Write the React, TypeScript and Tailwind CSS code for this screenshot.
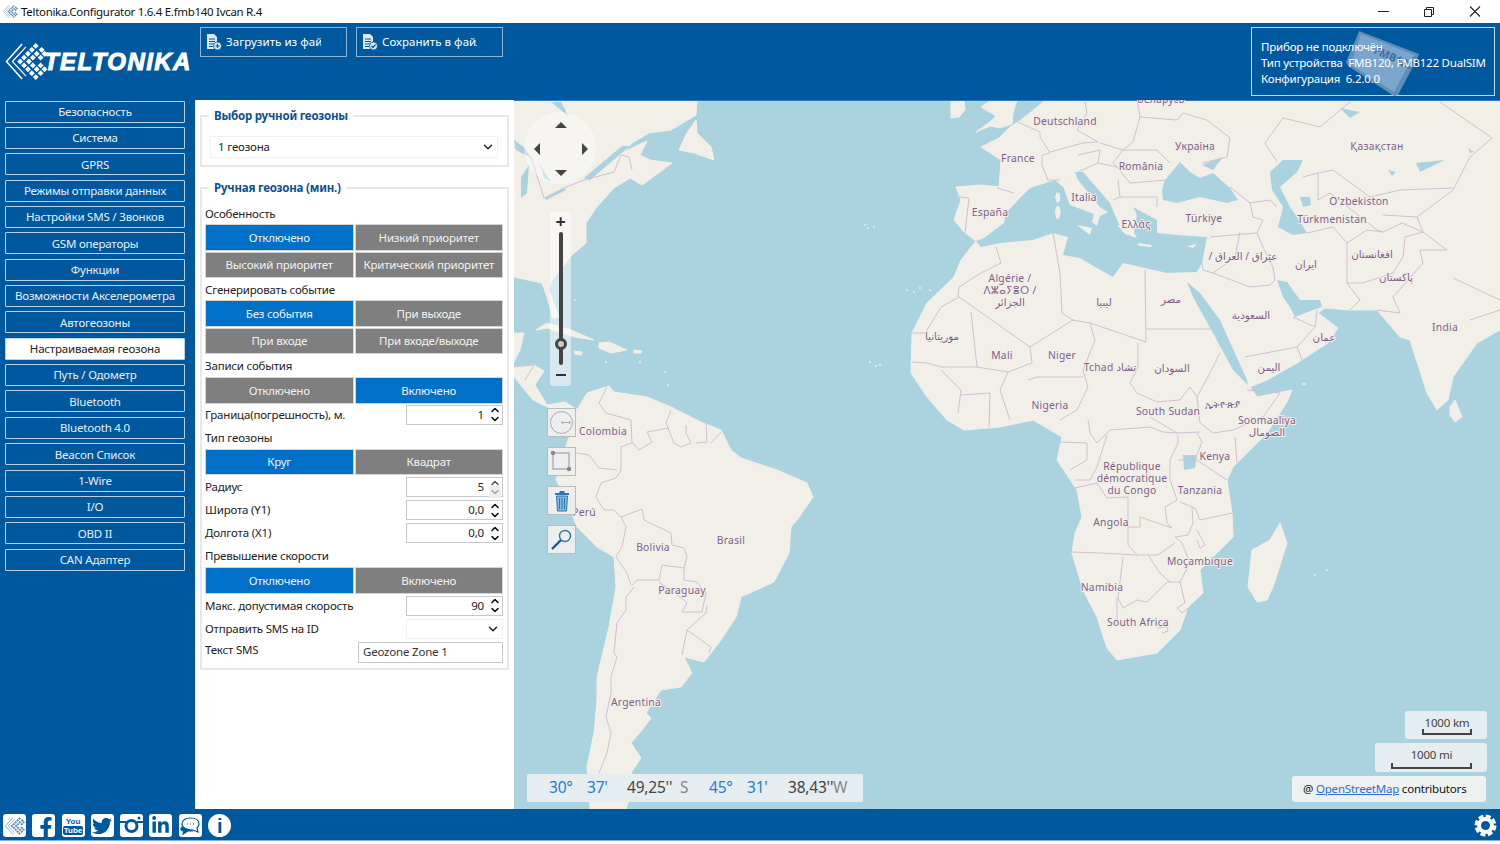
import { ChevronDown, ChevronUp } from "lucide-react";
import { FaFacebookF, FaLinkedinIn, FaTwitter } from "react-icons/fa";

const menu = [
  "Безопасность", "Система", "GPRS", "Режимы отправки данных", "Настройки SMS / Звонков",
  "GSM операторы", "Функции", "Возможности Акселерометра", "Автогеозоны", "Настраиваемая геозона",
  "Путь / Одометр", "Bluetooth", "Bluetooth 4.0", "Beacon Список", "1-Wire", "I/O", "OBD II", "CAN Адаптер",
];

const land = [
  // North America
  "514,100 697,100 696,115 671,130 649,133 632,143 624,152 636,146 647,141 640,155 650,160 672,163 660,172 642,185 630,178 614,188 596,208 586,223 586,243 572,255 551,282 549,290 559,317 553,318 547,297 542,283 514,277",
  // Newfoundland
  "696,120 687,133 679,150 694,153 714,160 711,147 697,133",
  // Mexico tail + Central America
  "514,333 524,333 520,350 514,362",
  "514,367 534,365 544,371 535,385 547,405 565,402 578,410 570,415 554,410 533,400 514,377",
  // Caribbean
  "536,330 547,323 571,330 594,340 574,337 547,328",
  "599,343 609,342 627,350 611,353 599,348",
  "574,351 582,352 581,355 575,354",
  "634,350 642,351 641,353 634,353",
  // South America
  "577,410 587,393 609,386 614,392 647,397 671,407 701,422 721,430 731,450 741,458 777,470 807,483 813,497 797,520 791,527 789,553 774,582 741,597 736,617 721,640 711,653 704,662 684,657 692,673 681,687 661,690 646,713 651,718 642,730 631,743 641,758 631,773 632,790 626,809 590,809 587,767 594,733 597,700 597,677 609,627 616,587 614,557 597,547 577,527 567,500 556,480 567,443 576,420",
  // Afro-Eurasia
  "1045,100 1500,100 1500,330 1477,343 1453,377 1448,400 1437,410 1427,393 1410,340 1400,337 1377,310 1350,310 1325,308 1318,313 1338,328 1328,343 1297,363 1267,380 1250,387 1257,397 1292,390 1287,402 1267,433 1233,467 1227,480 1232,513 1233,537 1217,553 1200,570 1203,593 1188,607 1180,630 1157,653 1117,660 1107,648 1097,617 1083,590 1072,553 1075,533 1082,517 1077,490 1057,460 1062,437 1033,420 1000,427 964,430 947,420 927,397 911,373 912,333 927,303 954,277 961,260 976,241 964,232 954,220 961,200 956,187 981,185 999,187 1001,160 981,147 999,138 1010,127 1018,122 1030,113 1043,102",
  // British Isles
  "991,100 1017,100 1013,113 1012,124 1000,128 990,126 976,132 990,122 996,116 981,107",
  "951,100 964,100 965,110 959,117 951,118",
  // Islands
  "1280,523 1287,543 1273,587 1267,600 1257,602 1248,587 1252,550 1270,540",
  "1450,407 1455,400 1462,417 1455,422 1450,415",
];

const water = [
  // Mediterranean
  "976,241 984,238 1004,223 1006,213 1020,198 1030,188 1055,180 1063,187 1075,172 1083,172 1110,203 1118,222 1122,228 1133,237 1137,215 1133,207 1157,220 1157,233 1177,235 1207,237 1202,263 1197,272 1167,273 1145,268 1123,263 1113,277 1097,268 1080,258 1063,255 1068,237 1053,233 1033,240 1000,243 981,247",
  // Black Sea + Azov
  "1162,190 1165,180 1180,162 1190,172 1200,178 1213,173 1230,188 1238,200 1227,203 1200,197 1177,203 1163,200",
  "1202,165 1223,157 1213,170",
  // Caspian
  "1270,172 1283,160 1303,160 1297,172 1280,187 1290,207 1297,217 1307,233 1293,235 1278,227 1283,207 1272,190",
  "1300,197 1310,197 1311,205 1303,207",
  // Red Sea
  "1187,282 1200,293 1220,320 1247,380 1248,385 1233,370 1213,333 1193,297",
  // Persian Gulf
  "1277,280 1287,282 1300,300 1320,300 1322,307 1313,310 1295,317 1290,307 1283,297",
  // Great lakes, Hudson
  "514,140 525,148 531,158 516,150",
  "521,177 529,165 527,193 521,198",
  "539,163 551,182 544,178 542,170",
  "545,198 564,188 566,190 546,200",
  "551,102 569,117 561,102",
  // St Lawrence
  "584,178 622,146 630,146 590,180",
  // Lakes
  "1183,455 1197,455 1195,468 1184,470",
  "1416,163 1445,160 1420,172",
  "1340,108 1360,112 1350,118",
  "1468,148 1474,152 1470,153",
  "1388,170 1396,172 1392,176",
];

const landOnTop = [
  "1063,186 1075,172 1078,180 1100,207 1108,212 1100,216 1097,226 1092,222 1094,214 1070,205",
  "1077,225 1092,228 1090,235",
  "1056,207 1059,206 1061,212 1059,219 1056,218 1055,212",
  "1057,192 1060,194 1060,201 1057,203 1055,197",
  "1138,243 1152,245 1151,247 1139,246",
  "1187,246 1197,244 1193,248",
  "1117,225 1130,225 1137,238 1125,234",
  "1118,205 1133,215 1135,224 1122,222",
];

const islets = [
  [907, 290], [914, 292], [920, 288], [930, 290], [868, 228], [865, 225], [874, 227], [870, 362], [876, 366], [880, 365],
  [1315, 575], [1327, 570], [1305, 384], [1303, 384], [606, 362], [640, 362], [665, 372], [668, 385], [555, 308], [575, 300],
] as const;

const borders = [
  // Africa
  "1053,233 1060,273 1062,313 1073,320 1030,347 959,297",
  "1145,270 1146,342 1090,323 1073,320",
  "1146,329 1213,329",
  "1138,343 1138,367 1130,383 1137,393 1157,402 1180,400 1190,387 1197,397 1210,373 1220,353",
  "1090,323 1095,340 1083,370 1088,387 1077,410 1060,420",
  "1028,380 1037,377 1083,377",
  "1030,347 1032,363 1008,372 1000,390 1010,420",
  "959,297 941,307 927,330 927,333 912,333",
  "971,312 977,367 941,367 927,363 912,362",
  "996,247 1001,263 981,273 959,287 958,297",
  "941,370 961,390 958,413",
  "961,395 990,393 989,427",
  "977,367 1008,372",
  "1247,390 1280,393 1263,417 1233,430 1213,433 1200,423 1197,397",
  "1235,437 1237,463",
  "1150,417 1177,433 1200,432",
  "1088,420 1090,433 1097,443 1110,430 1150,427 1163,432 1178,433",
  "1178,435 1178,443 1170,460 1170,480 1177,500 1165,507 1167,523 1172,528 1140,517 1140,527 1128,527 1128,497 1107,498 1097,483 1075,488",
  "1107,435 1097,467 1090,480 1075,480",
  "1060,442 1087,443 1087,460 1070,470",
  "1178,460 1197,460 1227,480",
  "1197,433 1202,442 1197,455",
  "1180,502 1195,508 1200,520 1232,513",
  "1072,552 1100,553 1137,555 1158,555 1175,543",
  "1123,557 1118,598 1123,608 1137,600 1147,602 1167,582 1180,582 1190,563 1182,543 1175,537",
  "1117,597 1117,620",
  "1128,527 1128,545 1137,555",
  "1148,555 1160,573 1170,582",
  "1180,582 1185,603 1177,608 1182,613 1188,608",
  "1192,507 1193,523 1188,535 1175,537",
  "1197,530 1205,545 1200,548 1197,540",
  "1157,628 1167,627 1168,631 1162,633",
  // Europe
  "1040,132 1040,137 1050,153 1042,155 1042,165 1048,180 1060,180",
  "1085,102 1087,113 1077,130 1098,142 1083,143 1050,152",
  "1137,100 1140,117 1133,142 1123,150 1100,143",
  "1140,117 1177,120 1183,113 1207,120 1230,138 1227,157 1203,163",
  "1123,150 1157,150 1170,163",
  "1117,167 1130,183 1167,180",
  "1123,150 1113,163 1117,167",
  "1100,150 1098,163 1117,167",
  "1078,155 1100,150",
  "1078,172 1098,163",
  "1120,197 1133,197 1157,197",
  "1118,180 1120,197 1113,200",
  "959,197 969,198 965,233",
  "997,188 1014,193",
  "1018,122 1040,132",
  // Middle East, Asia
  "1157,197 1157,207",
  "1230,187 1250,203 1253,217 1263,220 1257,233 1210,237",
  "1250,203 1270,200 1277,207",
  "1240,232 1235,257 1213,273 1203,270 1202,263",
  "1213,273 1250,287 1270,285 1275,280",
  "1257,233 1263,247 1273,267 1275,280",
  "1245,357 1297,347 1315,327 1293,317",
  "1297,347 1302,360",
  "1315,327 1317,310",
  "1347,243 1347,283 1360,300 1350,310",
  "1307,233 1333,227 1347,243",
  "1347,243 1367,230 1383,232 1402,223 1423,232 1405,237 1403,257 1393,273 1363,283 1347,283",
  "1423,232 1447,250 1420,250 1423,263 1393,297 1400,313 1377,310",
  "1423,232 1417,217 1453,190 1470,157 1492,138 1440,102",
  "1265,143 1283,118 1320,127 1350,102",
  "1265,143 1277,162",
  "1303,177 1318,173 1333,170 1370,197 1400,190 1453,188",
  "1318,173 1318,200 1330,193 1377,230 1383,232",
  "1383,215 1417,217",
  "1453,278 1500,300",
  "1470,320 1500,310",
  // Americas
  "514,147 531,157 544,198 564,188 584,180 614,172 621,155 629,157 632,170",
  "514,367 534,365 525,380",
  "607,387 599,403 606,413 631,420 632,443 621,447 621,470 616,478",
  "671,410 666,423 674,443 681,447",
  "632,442 639,450 652,442 647,432 669,428",
  "686,425 686,433 691,443 681,447",
  "706,423 707,442 696,443",
  "721,432 711,443",
  "570,452 589,455 599,468 617,470",
  "616,478 601,483 596,497 604,510 614,510 621,517 626,527 622,547 616,557 627,573 631,585",
  "621,517 642,509 644,520 671,533 672,545 684,548 687,557 684,568 662,565 659,580 637,580 632,585",
  "634,587 626,597 626,610 617,623 614,653 617,657 611,677 611,693 606,717 611,733 607,753 599,773",
  "659,582 684,600 687,603 682,612 702,612 706,593 697,582 684,580 684,568",
  "707,605 706,613 687,630 711,647 709,653",
  "687,630 682,655",
];

const labels = [
  { t: "Беларусь", x: 1161, y: 103 }, { t: "Deutschland", x: 1065, y: 125 }, { t: "France", x: 1018, y: 162 },
  { t: "Україна", x: 1195, y: 150 }, { t: "Қазақстан", x: 1377, y: 150 }, { t: "România", x: 1141, y: 170 },
  { t: "Italia", x: 1084, y: 201 }, { t: "España", x: 990, y: 216 }, { t: "Türkiye", x: 1204, y: 222 },
  { t: "O'zbekiston", x: 1359, y: 205 }, { t: "Türkmenistan", x: 1332, y: 223 }, { t: "Ελλάς", x: 1136, y: 228 },
  { t: "Algérie /", x: 1010, y: 282 }, { t: "ⴷⵣⴰⵢⴻⵔ /", x: 1010, y: 294 }, { t: "الجزائر", x: 1010, y: 306 },
  { t: "ليبيا", x: 1104, y: 306 }, { t: "مصر", x: 1171, y: 303 }, { t: "السعودية", x: 1251, y: 319 },
  { t: "ایران", x: 1306, y: 268 }, { t: "افغانستان", x: 1372, y: 258 }, { t: "پاکستان", x: 1396, y: 281 },
  { t: "India", x: 1445, y: 331 }, { t: "/ عێراق / العراق", x: 1243, y: 260 }, { t: "عمان", x: 1324, y: 341 },
  { t: "اليمن", x: 1269, y: 371 }, { t: "السودان", x: 1172, y: 372 }, { t: "Tchad تشاد", x: 1110, y: 371 },
  { t: "Niger", x: 1062, y: 359 }, { t: "Mali", x: 1002, y: 359 }, { t: "موريتانيا", x: 942, y: 340 },
  { t: "Nigeria", x: 1050, y: 409 }, { t: "South Sudan", x: 1168, y: 415 }, { t: "ኢትዮጵያ", x: 1223, y: 408 },
  { t: "Soomaaliya", x: 1267, y: 424 }, { t: "الصومال", x: 1267, y: 436 }, { t: "République", x: 1132, y: 470 },
  { t: "démocratique", x: 1132, y: 482 }, { t: "du Congo", x: 1132, y: 494 }, { t: "Kenya", x: 1215, y: 460 },
  { t: "Tanzania", x: 1200, y: 494 }, { t: "Angola", x: 1111, y: 526 }, { t: "Moçambique", x: 1200, y: 565 },
  { t: "Namibia", x: 1102, y: 591 }, { t: "South Africa", x: 1138, y: 626 }, { t: "Colombia", x: 603, y: 435 },
  { t: "Perú", x: 584, y: 516 }, { t: "Bolivia", x: 653, y: 551 }, { t: "Brasil", x: 731, y: 544 },
  { t: "Paraguay", x: 682, y: 594 }, { t: "Argentina", x: 636, y: 706 },
];

function WorldMap() {
  return (
    <svg viewBox="514 100 986 709" className="block h-full w-full">
      <rect x="514" y="100" width="986" height="709" fill="#aad3df" />
      {land.map((p) => (
        <polygon key={p} points={p} fill="#f2efe9" stroke="#f2efe9" strokeLinejoin="round" />
      ))}
      {water.map((p) => (
        <polygon key={p} points={p} fill="#aad3df" />
      ))}
      {landOnTop.map((p) => (
        <polygon key={p} points={p} fill="#f2efe9" />
      ))}
      {islets.map(([x, y]) => (
        <circle key={`${x}-${y}`} cx={x} cy={y} r="0.9" fill="#f2efe9" />
      ))}
      {borders.map((p) => (
        <polyline key={p} points={p} fill="none" stroke="#d0bfd0" strokeWidth="1" strokeLinejoin="round" />
      ))}
      <rect x="514" y="100" width="986" height="1" fill="#2b7dbd" />
      {labels.map((l) => (
        <text
          key={l.t}
          x={l.x}
          y={l.y}
          textAnchor="middle"
          fill="#7f5f88"
          stroke="#f2efe9"
          strokeWidth="2"
          className="text-[10.3px] tracking-[0.25px] [paint-order:stroke] font-['Noto_Sans','DejaVu_Sans',sans-serif]"
        >
          {l.t}
        </text>
      ))}
    </svg>
  );
}

// chevrons of small diamonds from the Teltonika mark
const markDots: [number, number][] = [
  [15, 19], [19, 15], [23, 11], [27, 7], [19, 23], [23, 27], [27, 31], [31, 35],
  [24, 19], [28, 15], [32, 11], [28, 23], [32, 27], [36, 31], [31, 3], [37, 7],
  [36, 15], [36, 23], [40, 11], [40, 27],
];

function LogoMark({ color, className }: { color: string; className: string }) {
  return (
    <svg viewBox="0 0 43 38" className={className}>
      <polyline points="17,1 1,19 17,37" fill="none" stroke={color} strokeWidth="1.6" />
      <polyline points="21,4 7,19 21,34" fill="none" stroke={color} strokeWidth="1.2" />
      {markDots.map(([x, y], i) => (
        <polygon key={i} points={`${x - 3},${y} ${x},${y - 3} ${x + 3},${y} ${x},${y + 3}`} fill={color} />
      ))}
    </svg>
  );
}

function FileIcon({ check }: { check?: boolean }) {
  return (
    <svg width="16" height="18" viewBox="0 0 16 18" className="shrink-0">
      <path d="M1 1h7l3 3v12H1z" fill="#dfe9f3" />
      <path d="M3 6h6M3 8.5h6M3 11h5M3 13.5h4" stroke="#00589e" strokeWidth="1" />
      <circle cx="11.5" cy="13" r="4" fill="#dfe9f3" stroke="#00589e" strokeWidth="0.8" />
      {check ? (
        <path d="M9.5 13l1.5 1.5 2.5-3" fill="none" stroke="#00589e" strokeWidth="1.2" />
      ) : (
        <path d="M11.5 11v4M9.5 13h4" stroke="#00589e" strokeWidth="1.2" />
      )}
    </svg>
  );
}

function HeaderButton({ label, check }: { label: string; check?: boolean }) {
  return (
    <div className="flex h-[30px] w-[147px] items-center gap-[4px] border border-[#8fb4d4] pl-[5px] text-white">
      <FileIcon check={check} />
      <span className="w-[95px] overflow-hidden whitespace-nowrap text-[11.5px] tracking-[0.05px]">{label}</span>
    </div>
  );
}

function Label({ children, className }: { children: string; className: string }) {
  return <div className={`flex items-center text-[#222] ${className}`}>{children}</div>;
}

function Toggles({ items, active }: { items: string[]; active: number }) {
  return (
    <div className="grid grid-cols-2 gap-[1px]">
      {items.map((t, i) => (
        <div
          key={t}
          className={`flex h-[26.5px] items-center justify-center border border-[#d5d5d5] text-[#f2f2f2] ${
            i === active ? "bg-[#0070c8]" : "bg-[#7f7f7f]"
          }`}
        >
          {t}
        </div>
      ))}
    </div>
  );
}

function SpinRow({ label, value, className, off }: { label: string; value: string; className: string; off?: boolean }) {
  return (
    <div className={`flex h-[20px] items-center justify-between ${className}`}>
      <span className="text-[#222]">{label}</span>
      <div className="flex h-[20px] w-[97px] items-center justify-end border border-[#c8c8c8] bg-white text-[#222]">
        <span>{value}</span>
        <div className="ml-[4px] flex w-[14px] flex-col items-center">
          <ChevronUp size={12} strokeWidth={3.2} className={`-mb-[3px] ${off ? "text-[#555]" : "text-[#111]"}`} />
          <ChevronDown size={12} strokeWidth={3.2} className={off ? "bg-[#eee] text-[#aaa]" : "text-[#111]"} />
        </div>
      </div>
    </div>
  );
}

function Tile({ children }: { children: React.ReactNode }) {
  return (
    <div className="flex h-[23px] w-[23px] items-center justify-center overflow-hidden rounded-[3px] bg-white text-[#00589e]">
      {children}
    </div>
  );
}

export default function App() {
  return (
    <div className="flex h-[844px] w-[1500px] flex-col overflow-hidden bg-white font-['Noto_Sans',sans-serif] text-[11.5px] tracking-[-0.2px]">
      {/* title bar */}
      <div className="flex h-[23px] shrink-0 items-center bg-white pl-[3px] text-[#111]">
        <LogoMark color="#5d87b3" className="h-[13px] w-[15px]" />
        <span className="ml-[3px] tracking-[-0.3px]">Teltonika.Configurator 1.6.4 E.fmb140 Ivcan R.4</span>
        <svg width="122" height="14" viewBox="0 0 122 14" className="ml-auto">
          <path d="M0 6.5h11" stroke="#222" />
          <path d="M46.5 4.5h7v7h-7zM48.5 4.5v-2h7v7h-2" fill="none" stroke="#222" />
          <path d="M92 1.5l10 10M102 1.5l-10 10" stroke="#222" strokeWidth="1.1" />
        </svg>
      </div>

      {/* header */}
      <div className="flex h-[77px] shrink-0 bg-[#00589e] pt-[4px]">
        <div className="flex w-[200px] items-start pl-[5px] pt-[16px]">
          <LogoMark color="#ffffff" className="h-[37px] w-[43px] shrink-0" />
          <span className="-ml-[4px] mt-[6px] whitespace-nowrap text-[24px] font-black italic leading-[26px] tracking-[1.4px] text-white font-['Liberation_Sans',sans-serif] [-webkit-text-stroke:1px_white]">
            TELTONIKA
          </span>
        </div>
        <div className="flex gap-[9px]">
          <HeaderButton label="Загрузить из файла" />
          <HeaderButton label="Сохранить в файл" check />
        </div>
        <div className="relative ml-auto mr-[5px] h-[69px] w-[244px] border-[1.5px] border-[#c4d8ea] pl-[9px] pt-[11px] leading-[16px] text-white">
          <svg width="90" height="69" viewBox="0 0 90 69" className="absolute left-[91px] top-0">
            <path d="M16 3l60 23-2 5-19 36-4 1-46-30-2-4 12-28z" fill="#5d8fbd" />
            <path d="M18 6l53 21-20 37-43-27z" fill="#7ba5ca" />
            <text x="30" y="25" fill="#3f6f9f" transform="rotate(24 30 25)" className="text-[11px] font-bold">FMB120</text>
          </svg>
          <div className="relative whitespace-nowrap">
            <div>Прибор не подключён</div>
            <div>Тип устройства&nbsp; FMB120, FMB122 DualSIM</div>
            <div>Конфигурация&nbsp; 6.2.0.0</div>
          </div>
        </div>
      </div>

      {/* middle */}
      <div className="flex h-[709px] shrink-0 bg-[#00589e]">
        <div className="flex w-[195px] shrink-0 flex-col gap-[4.36px] pl-[5px] pr-[10px] pt-[0.5px]">
          {menu.map((m) => (
            <div
              key={m}
              className={`flex h-[22px] items-center justify-center whitespace-nowrap rounded-[1px] border border-[#b9d0e5] ${
                m === "Настраиваемая геозона" ? "bg-white text-[#222]" : "text-[#e8f0f7]"
              }`}
            >
              {m}
            </div>
          ))}
        </div>

        <div className="w-[319px] shrink-0 bg-white px-[5px] pt-[8px]">
          <fieldset className="h-[59px] border-2 border-[#e6e8eb] pl-[8px] pr-[9px]">
            <legend className="-ml-[1px] px-[5px] font-bold leading-[16px] text-[#0b4f96]">
              Выбор ручной геозоны
            </legend>
            <div className="mt-[12px] flex h-[22px] items-center justify-between border border-[#eef2f6] pl-[7px] pr-[2px] text-[#222]">
              1 геозона
              <ChevronDown size={14} strokeWidth={2.5} className="text-[#222]" />
            </div>
          </fieldset>

          <fieldset className="mt-[13px] h-[490px] border-2 border-[#e6e8eb] pl-[3px] pr-[4px]">
            <legend className="ml-[4px] px-[5px] font-bold leading-[16px] text-[#0b4f96]">
              Ручная геозона (мин.)
            </legend>
            <Label className="h-[28px] pt-[8px]">Особенность</Label>
            <Toggles items={["Отключено", "Низкий приоритет", "Высокий приоритет", "Критический приоритет"]} active={0} />
            <Label className="h-[22px] pt-[2px]">Сгенерировать событие</Label>
            <Toggles items={["Без события", "При выходе", "При входе", "При входе/выходе"]} active={0} />
            <Label className="h-[23px] pt-[1px]">Записи события</Label>
            <Toggles items={["Отключено", "Включено"]} active={1} />
            <SpinRow label="Граница(погрешность), м." value="1" className="mt-[1px]" />
            <Label className="h-[24px] pt-[2px]">Тип геозоны</Label>
            <Toggles items={["Круг", "Квадрат"]} active={0} />
            <SpinRow label="Радиус" value="5" className="mt-[2px]" off />
            <SpinRow label="Широта (Y1)" value="0,0" className="mt-[3px]" />
            <SpinRow label="Долгота (X1)" value="0,0" className="mt-[3px]" />
            <Label className="h-[24px] pt-[2px]">Превышение скорости</Label>
            <Toggles items={["Отключено", "Включено"]} active={0} />
            <SpinRow label="Макс. допустимая скорость" value="90" className="mt-[2px]" />
            <div className="mt-[3px] flex h-[20px] items-center justify-between">
              <span className="text-[#222]">Отправить SMS на ID</span>
              <div className="flex h-[20px] w-[97px] items-center justify-end border border-[#eef2f6] pr-[2px]">
                <ChevronDown size={14} strokeWidth={2.5} className="text-[#222]" />
              </div>
            </div>
            <div className="mt-[3px] flex h-[21px] justify-between">
              <span className="leading-[16px] text-[#222]">Текст SMS</span>
              <div className="flex h-[21px] w-[145px] items-center border border-[#c8c8c8] pl-[4px] text-[#333]">
                Geozone Zone 1
              </div>
            </div>
          </fieldset>
        </div>

        <div className="relative flex-1 overflow-hidden">
          <WorldMap />

          {/* pan control */}
          <div className="absolute left-[10px] top-[12px] h-[72px] w-[72px] rounded-full bg-white/40" />
          <svg width="60" height="60" viewBox="0 0 60 60" className="absolute left-[17px] top-[19px]">
            <path d="M30 3l6 6h-12zM30 57l-6-6h12zM3 30l6-6v12zM57 30l-6-6v12z" fill="#444" />
          </svg>

          {/* zoom slider */}
          <div className="absolute left-[36px] top-[112px] flex h-[174px] w-[21px] flex-col items-center rounded-[3px] bg-white/50">
            <span className="mt-[1px] h-[16px] text-[18px] font-bold leading-[16px] text-[#333]">+</span>
            <div className="relative mt-[3px] h-[133px] w-[4px] rounded-full bg-[#444]">
              <div className="absolute -left-[4px] top-[106px] h-[12px] w-[12px] rounded-full border-[3px] border-[#444] bg-[#ccc]" />
            </div>
            <div className="mt-[9px] h-[2px] w-[10px] bg-[#333]" />
          </div>

          {/* draw tools */}
          <div className="absolute left-[33px] top-[308px] flex flex-col gap-[10px]">
            <div className="flex h-[29px] w-[29px] items-center justify-center border border-[#bbb] bg-[#eeeeee]">
              <svg width="25" height="25" viewBox="0 0 25 25" fill="none">
                <circle cx="12.5" cy="12.5" r="11" stroke="#aaa" />
                <path d="M12.5 12.5h9M14 11l-1.5 1.500 1.500 1.500M20 11l1.500 1.500-1.500 1.500" stroke="#aaa" />
              </svg>
            </div>
            <div className="flex h-[29px] w-[29px] items-center justify-center border border-[#bbb] bg-[#eeeeee]">
              <svg width="25" height="25" viewBox="0 0 25 25" fill="none">
                <rect x="4" y="4" width="16" height="16" stroke="#aaa" strokeWidth="1.3" />
                <circle cx="4" cy="4" r="2.2" fill="#888" />
                <circle cx="20" cy="20" r="2.2" fill="#888" />
              </svg>
            </div>
            <div className="flex h-[29px] w-[29px] items-center justify-center border border-[#bbb] bg-[#eeeeee]">
              <svg width="16" height="22" viewBox="0 0 16 22" fill="none">
                <path d="M1 4h14M5.500 2h5" stroke="#2a76b8" strokeWidth="2" />
                <path d="M2.500 6h11l-1 15h-9z" fill="#8ab6dc" stroke="#2a76b8" />
                <path d="M5.500 8v11M8 8v11M10.500 8v11" stroke="#2a76b8" />
              </svg>
            </div>
            <div className="flex h-[29px] w-[29px] items-center justify-center border border-[#bbb] bg-[#eeeeee]">
              <svg width="23" height="23" viewBox="0 0 23 23" fill="none">
                <circle cx="15" cy="8" r="5.500" stroke="#2a76b8" strokeWidth="1.4" />
                <path d="M11 12L2 21" stroke="#115b9f" strokeWidth="2.4" />
              </svg>
            </div>
          </div>

          {/* coordinates */}
          <div className="absolute bottom-[7px] left-[13px] flex h-[28px] w-[336px] items-center rounded-[2px] bg-[#e6edf0] text-[15.5px] text-[#444]">
            <span className="ml-[22px] w-[38px] text-[#2a7ad0]">30°</span>
            <span className="w-[40px] text-[#2a7ad0]">37'</span>
            <span className="w-[53px]">49,25''</span>
            <span className="w-[29px] text-[#888]">S</span>
            <span className="w-[38px] text-[#2a7ad0]">45°</span>
            <span className="w-[41px] text-[#2a7ad0]">31'</span>
            <span className="w-[45px]">38,43''</span>
            <span className="text-[#888]">W</span>
          </div>

          {/* scale */}
          <div className="absolute bottom-[70px] right-[13px] flex h-[28px] w-[82px] flex-col items-end rounded-[3px] bg-[#e6edf0] pr-[15px] pt-[4px]">
            <span className="w-[50px] whitespace-nowrap text-center leading-[16px] text-[#444]">1000 km</span>
            <div className="-mt-[2px] h-[6px] w-[50px] border-x-2 border-b-2 border-[#444]" />
          </div>
          <div className="absolute bottom-[37px] right-[13px] flex h-[29px] w-[112px] flex-col items-end rounded-[3px] bg-[#e6edf0] pr-[15px] pt-[4px]">
            <span className="w-[81px] text-center leading-[16px] text-[#444]">1000 mi</span>
            <div className="h-[6px] w-[81px] border-x-2 border-b-2 border-[#444]" />
          </div>
          <div className="absolute bottom-[7px] right-[14px] flex h-[26px] w-[194px] items-center rounded-[3px] bg-[#eef1f2] pl-[11px] text-[#111]">
            <span>@&nbsp;</span>
            <span className="text-[#2a6fd6] underline">OpenStreetMap</span>
            <span>&nbsp;contributors</span>
          </div>
        </div>
      </div>

      {/* bottom bar */}
      <div className="flex h-[32px] shrink-0 items-center gap-[6.300px] border-b border-[#7fb0d8] bg-[#00589e] pl-[3px] pr-[3px] pt-[2px]">
        <Tile>
          <LogoMark color="#5d8fbd" className="h-[18px] w-[20px]" />
        </Tile>
        <Tile>
          <FaFacebookF size={21} className="ml-[5px] mt-[3px]" />
        </Tile>
        <Tile>
          <div className="flex flex-col items-center font-['Liberation_Sans',sans-serif] text-[8px] font-bold leading-[9px] tracking-normal">
            <span>You</span>
            <span className="rounded-[2px] bg-[#00589e] px-[1px] text-white">Tube</span>
          </div>
        </Tile>
        <Tile>
          <FaTwitter size={20} />
        </Tile>
        <Tile>
          <svg width="23" height="23" viewBox="0 0 23 23" fill="none" stroke="#00589e">
            <circle cx="11.500" cy="12" r="5.500" strokeWidth="3" />
            <path d="M0 8h6M17 8h6" strokeWidth="2" />
            <circle cx="19" cy="4" r="1.500" fill="#00589e" stroke="none" />
          </svg>
        </Tile>
        <Tile>
          <FaLinkedinIn size={19} />
        </Tile>
        <Tile>
          <svg width="21" height="19" viewBox="0 0 21 19" fill="none" stroke="#00589e" strokeWidth="1.200">
            <path d="M10 2c5 0 9 2 9 6 0 2-1 3-2 4l1 4-5-2c-6 0-11-2-11-6 0-4 4-6 8-6z" />
            <path d="M2 11c-2 2-1 4 2 4l-1 3 5-3h5" fill="#00589e" />
            <path d="M7 8h1M10 8h1M13 8h1" />
          </svg>
        </Tile>
        <div className="flex h-[23px] w-[23px] items-center justify-center rounded-full bg-white font-['Liberation_Sans',sans-serif] text-[20px] font-bold leading-none text-[#00589e]">
          i
        </div>
        <svg width="23" height="23" viewBox="0 0 23 23" fill="none" stroke="#ffffff" className="ml-auto">
          <circle cx="11.500" cy="11.500" r="6.500" strokeWidth="4" />
          <circle cx="11.500" cy="11.500" r="9.500" strokeWidth="3" strokeDasharray="5 2.460" />
        </svg>
      </div>
      <div className="flex-1 bg-white" />
    </div>
  );
}
